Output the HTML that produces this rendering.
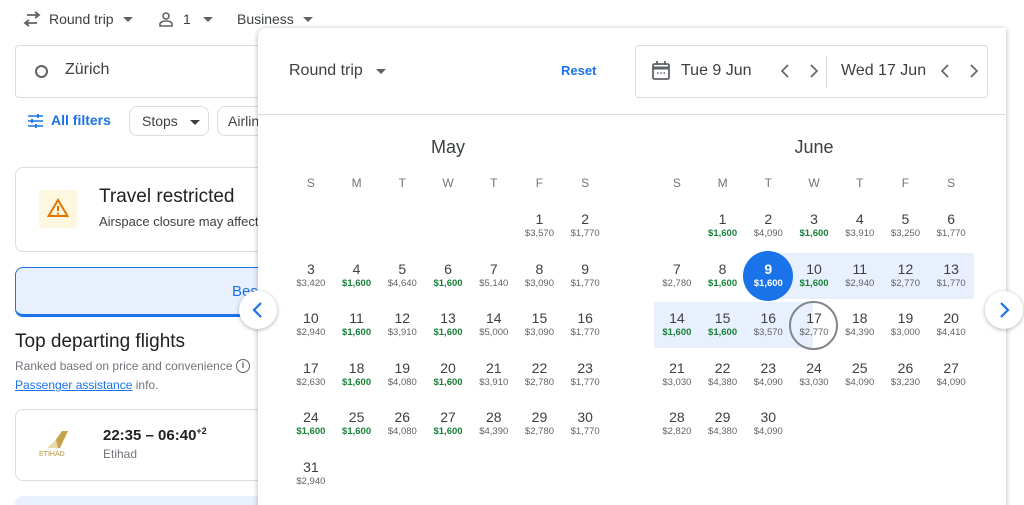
<!DOCTYPE html>
<html><head><meta charset="utf-8"><style>
*{box-sizing:border-box;margin:0;padding:0}
html,body{width:1024px;height:505px;overflow:hidden}
body{background:#fff;font-family:"Liberation Sans",Arial,sans-serif;color:#3c4043;position:relative}
.a{position:absolute}
.caret{display:inline-block;width:0;height:0;border-left:5px solid transparent;border-right:5px solid transparent;border-top:5px solid #5f6368;vertical-align:middle}
.grid{position:absolute;top:201px;width:320px;display:grid;grid-template-columns:repeat(7,45.72px);grid-auto-rows:49.5px}
.c{text-align:center;padding-top:10px;position:relative;z-index:2}
.c b{display:block;font-weight:normal;font-size:14px;line-height:16px;color:#3c4043}
.c i{display:block;font-style:normal;font-size:9.5px;line-height:11px;margin-top:1px;color:#5f6368}
.c i.g{color:#188038;font-weight:bold}
.wd{position:absolute;top:176px;width:320px;display:grid;grid-template-columns:repeat(7,45.72px);font-size:12px;color:#70757a;text-align:center}
.band{position:absolute;background:#e8f0fe;z-index:1}
.nav{position:absolute;width:38px;height:38px;border-radius:50%;background:#fff;box-shadow:0 1px 4px rgba(0,0,0,.3);z-index:5}
</style></head><body>

<svg class="a" style="left:23px;top:11px" width="18" height="16" viewBox="0 0 18 16"><path d="M4 4h12M12 1l4 3-4 3M14 12H2M6 9l-4 3 4 3" stroke="#5f6368" stroke-width="1.8" fill="none"/></svg>
<div class="a" style="left:49px;top:11px;font-size:14px">Round trip</div>
<span class="caret a" style="left:123px;top:17px"></span>
<svg class="a" style="left:158px;top:11px" width="16" height="16" viewBox="0 0 16 16"><circle cx="8" cy="5" r="3" stroke="#5f6368" stroke-width="1.6" fill="none"/><path d="M2 15v-2c0-2 3-3 6-3s6 1 6 3v2z" stroke="#5f6368" stroke-width="1.6" fill="none"/></svg>
<div class="a" style="left:183px;top:11px;font-size:14px">1</div>
<span class="caret a" style="left:203px;top:17px"></span>
<div class="a" style="left:237px;top:11px;font-size:14px">Business</div>
<span class="caret a" style="left:303px;top:17px"></span>

<div class="a" style="left:15px;top:45px;width:260px;height:53px;border:1px solid #dadce0;border-radius:4px"></div>
<div class="a" style="left:35px;top:65px;width:13px;height:13px;border:2.5px solid #5f6368;border-radius:50%"></div>
<div class="a" style="left:65px;top:61px;font-size:16px">Zürich</div>

<svg class="a" style="left:28px;top:114px" width="15" height="14" viewBox="0 0 15 14"><path d="M0 2h15M0 7h15M0 12h15" stroke="#1a73e8" stroke-width="1.6"/><path d="M10 0v4M4 5v4M8 10v4" stroke="#1a73e8" stroke-width="1.8"/></svg>
<div class="a" style="left:51px;top:112px;font-size:14px;color:#1a73e8;font-weight:bold">All filters</div>
<div class="a" style="left:129px;top:106px;width:80px;height:30px;border:1px solid #dadce0;border-radius:8px;font-size:14px;padding:6px 0 0 12px">Stops <span class="caret" style="margin-left:8px;border-top-color:#3c4043"></span></div>
<div class="a" style="left:217px;top:106px;width:60px;height:30px;border:1px solid #dadce0;border-radius:8px;font-size:14px;padding:6px 0 0 10px">Airlines</div>

<div class="a" style="left:15px;top:167px;width:260px;height:85px;border:1px solid #dadce0;border-radius:8px"></div>
<div class="a" style="left:39px;top:190px;width:38px;height:38px;background:#fef7e0;border-radius:3px"></div>
<svg class="a" style="left:47px;top:198px" width="22" height="20" viewBox="0 0 22 20"><path d="M11 2L1.5 18h19z" stroke="#e37400" stroke-width="2" fill="none"/><path d="M11 8v5M11 14.5v2" stroke="#e37400" stroke-width="2"/></svg>
<div class="a" style="left:99px;top:186px;font-size:19px;color:#202124">Travel restricted</div>
<div class="a" style="left:99px;top:214px;font-size:13px">Airspace closure may affect</div>

<div class="a" style="left:15px;top:267px;width:260px;height:50px;background:#e8f0fe;border:1px solid #1a73e8;border-bottom-width:3px;border-radius:8px"></div>
<div class="a" style="left:232px;top:283px;font-size:15px;color:#1a73e8">Best</div>

<div class="a" style="left:15px;top:331px;font-size:19px;color:#202124">Top departing flights</div>
<div class="a" style="left:15px;top:359px;font-size:12px;color:#70757a">Ranked based on price and convenience</div>
<div class="a" style="left:236px;top:359px;width:14px;height:14px;border:1.5px solid #5f6368;border-radius:50%;font-size:9px;text-align:center;line-height:11px;font-weight:bold;color:#5f6368">i</div>
<div class="a" style="left:15px;top:378px;font-size:12px;color:#70757a"><span style="color:#1a73e8;text-decoration:underline">Passenger assistance</span> info.</div>

<div class="a" style="left:15px;top:409px;width:260px;height:72px;border:1px solid #dadce0;border-radius:8px"></div>
<svg class="a" style="left:38px;top:428px" width="34" height="30" viewBox="0 0 34 30"><path d="M12 20L24 3h6l-8 17z" fill="#c6a24a"/><path d="M9 20l9-8 2 8z" fill="#e8d9a8"/><text x="1" y="28" font-size="7" fill="#b8923a" font-family="Liberation Sans">ETIHAD</text></svg>
<div class="a" style="left:103px;top:426px;font-size:15px;color:#202124;font-weight:bold">22:35 – 06:40<sup style="font-size:9px">+2</sup></div>
<div class="a" style="left:103px;top:447px;font-size:12px;color:#70757a">Etihad</div>
<div class="a" style="left:15px;top:496px;width:260px;height:20px;background:#e8f0fe;border-radius:8px"></div>

<div class="a" style="left:258px;top:28px;width:748px;height:490px;background:#fff;box-shadow:0 1px 6px rgba(0,0,0,.3);border-radius:8px 0 0 0;z-index:3"></div>
<div class="a" style="z-index:4;left:0;top:0;width:1024px;height:505px">
<div class="a" style="left:289px;top:62px;font-size:16px">Round trip</div>
<span class="caret a" style="left:376px;top:69px"></span>
<div class="a" style="left:561px;top:63px;font-size:13px;color:#1a73e8;font-weight:bold">Reset</div>
<div class="a" style="left:635px;top:45px;width:353px;height:53px;border:1px solid #dadce0;border-radius:4px"></div>
<svg class="a" style="left:652px;top:61px" width="18" height="19" viewBox="0 0 18 19"><rect x="1" y="3" width="16" height="15" rx="1.5" stroke="#5f6368" stroke-width="1.8" fill="none"/><path d="M1 7h16" stroke="#5f6368" stroke-width="3"/><path d="M5 0v4M13 0v4" stroke="#5f6368" stroke-width="1.8"/><path d="M5 12h1.5M8.3 12h1.5M11.5 12h1.5" stroke="#5f6368" stroke-width="1.5"/></svg>
<div class="a" style="left:681px;top:62px;font-size:16px">Tue 9 Jun</div>
<svg class="a" style="left:778px;top:64px" width="44" height="14" viewBox="0 0 44 14"><path d="M10 1L4 7l6 6M33 1l6 6-6 6" stroke="#5f6368" stroke-width="1.6" fill="none"/></svg>
<div class="a" style="left:826px;top:56px;width:1px;height:32px;background:#dadce0"></div>
<div class="a" style="left:841px;top:62px;font-size:16px">Wed 17 Jun</div>
<svg class="a" style="left:938px;top:64px" width="44" height="14" viewBox="0 0 44 14"><path d="M10 1L4 7l6 6M33 1l6 6-6 6" stroke="#5f6368" stroke-width="1.6" fill="none"/></svg>
<div class="a" style="left:258px;top:114px;width:748px;height:1px;background:#dadce0"></div>

<div class="a" style="left:288px;top:137px;width:320px;text-align:center;font-size:18px;color:#3c4043">May</div>
<div class="a" style="left:654px;top:137px;width:320px;text-align:center;font-size:18px;color:#3c4043">June</div>
<div class="wd" style="left:288px"><span>S</span><span>M</span><span>T</span><span>W</span><span>T</span><span>F</span><span>S</span></div>
<div class="wd" style="left:654px"><span>S</span><span>M</span><span>T</span><span>W</span><span>T</span><span>F</span><span>S</span></div>

<div class="band" style="left:768px;top:253px;width:206px;height:46px"></div>
<div class="band" style="left:654px;top:302px;width:159px;height:46px"></div>
<div class="a" style="left:743px;top:251px;width:50px;height:50px;border-radius:50%;background:#1a73e8;z-index:1"></div>
<div class="a" style="left:789px;top:301px;width:49px;height:49px;border-radius:50%;border:2px solid #80868b;z-index:1"></div>

<div class="grid" style="left:288px">
<div></div><div></div><div></div><div></div><div></div>
<div class="c"><b>1</b><i>$3,570</i></div><div class="c"><b>2</b><i>$1,770</i></div>
<div class="c"><b>3</b><i>$3,420</i></div><div class="c"><b>4</b><i class="g">$1,600</i></div><div class="c"><b>5</b><i>$4,640</i></div><div class="c"><b>6</b><i class="g">$1,600</i></div><div class="c"><b>7</b><i>$5,140</i></div><div class="c"><b>8</b><i>$3,090</i></div><div class="c"><b>9</b><i>$1,770</i></div>
<div class="c"><b>10</b><i>$2,940</i></div><div class="c"><b>11</b><i class="g">$1,600</i></div><div class="c"><b>12</b><i>$3,910</i></div><div class="c"><b>13</b><i class="g">$1,600</i></div><div class="c"><b>14</b><i>$5,000</i></div><div class="c"><b>15</b><i>$3,090</i></div><div class="c"><b>16</b><i>$1,770</i></div>
<div class="c"><b>17</b><i>$2,630</i></div><div class="c"><b>18</b><i class="g">$1,600</i></div><div class="c"><b>19</b><i>$4,080</i></div><div class="c"><b>20</b><i class="g">$1,600</i></div><div class="c"><b>21</b><i>$3,910</i></div><div class="c"><b>22</b><i>$2,780</i></div><div class="c"><b>23</b><i>$1,770</i></div>
<div class="c"><b>24</b><i class="g">$1,600</i></div><div class="c"><b>25</b><i class="g">$1,600</i></div><div class="c"><b>26</b><i>$4,080</i></div><div class="c"><b>27</b><i class="g">$1,600</i></div><div class="c"><b>28</b><i>$4,390</i></div><div class="c"><b>29</b><i>$2,780</i></div><div class="c"><b>30</b><i>$1,770</i></div>
<div class="c"><b>31</b><i>$2,940</i></div>
</div>

<div class="grid" style="left:654px">
<div></div>
<div class="c"><b>1</b><i class="g">$1,600</i></div><div class="c"><b>2</b><i>$4,090</i></div><div class="c"><b>3</b><i class="g">$1,600</i></div><div class="c"><b>4</b><i>$3,910</i></div><div class="c"><b>5</b><i>$3,250</i></div><div class="c"><b>6</b><i>$1,770</i></div>
<div class="c"><b>7</b><i>$2,780</i></div><div class="c"><b>8</b><i class="g">$1,600</i></div><div class="c"><b style="color:#fff;font-weight:bold">9</b><i style="color:#fff;font-weight:bold">$1,600</i></div><div class="c"><b>10</b><i class="g">$1,600</i></div><div class="c"><b>11</b><i>$2,940</i></div><div class="c"><b>12</b><i>$2,770</i></div><div class="c"><b>13</b><i>$1,770</i></div>
<div class="c"><b>14</b><i class="g">$1,600</i></div><div class="c"><b>15</b><i class="g">$1,600</i></div><div class="c"><b>16</b><i>$3,570</i></div><div class="c"><b>17</b><i>$2,770</i></div><div class="c"><b>18</b><i>$4,390</i></div><div class="c"><b>19</b><i>$3,000</i></div><div class="c"><b>20</b><i>$4,410</i></div>
<div class="c"><b>21</b><i>$3,030</i></div><div class="c"><b>22</b><i>$4,380</i></div><div class="c"><b>23</b><i>$4,090</i></div><div class="c"><b>24</b><i>$3,030</i></div><div class="c"><b>25</b><i>$4,090</i></div><div class="c"><b>26</b><i>$3,230</i></div><div class="c"><b>27</b><i>$4,090</i></div>
<div class="c"><b>28</b><i>$2,820</i></div><div class="c"><b>29</b><i>$4,380</i></div><div class="c"><b>30</b><i>$4,090</i></div>
</div>
</div>

<div class="nav" style="left:239px;top:291px"><svg width="38" height="38" viewBox="0 0 38 38"><path d="M22 12l-7 7 7 7" stroke="#1a73e8" stroke-width="2.2" fill="none"/></svg></div>
<div class="nav" style="left:985px;top:291px"><svg width="38" height="38" viewBox="0 0 38 38"><path d="M16 12l7 7-7 7" stroke="#1a73e8" stroke-width="2.2" fill="none"/></svg></div>
</body></html>
